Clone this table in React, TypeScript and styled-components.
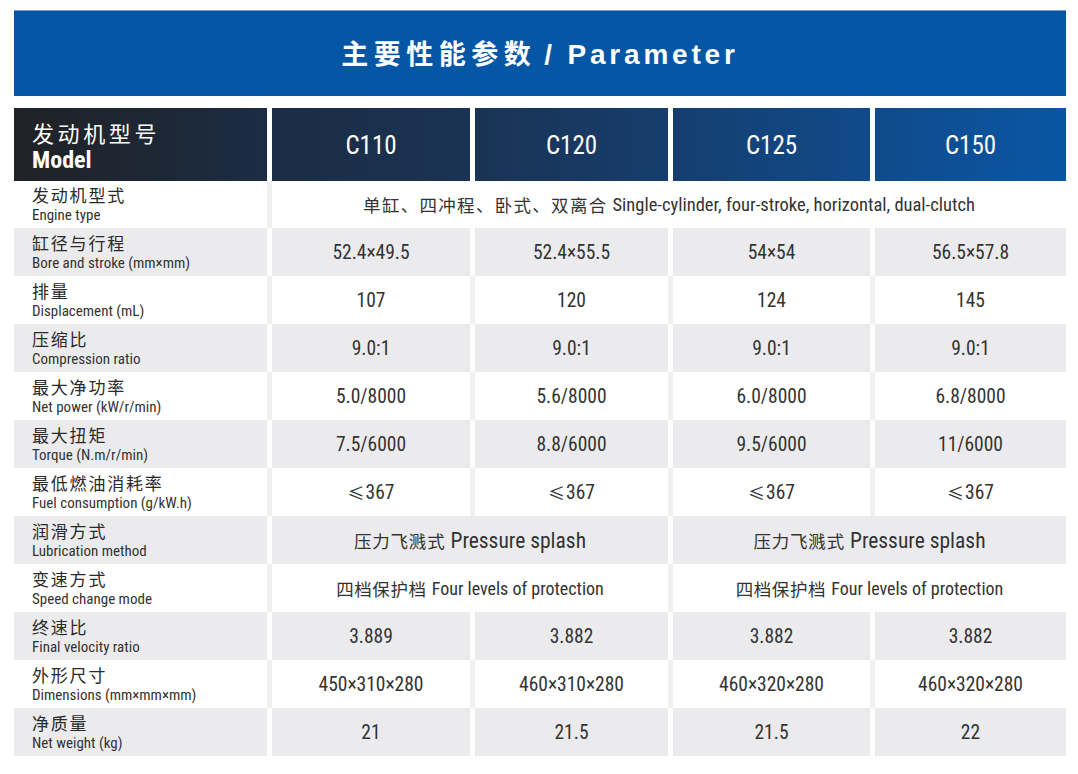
import React from 'react';
import styled, { createGlobalStyle } from 'styled-components';

const NARROW = `"Liberation Sans Narrow", "Arial Narrow", "Roboto Condensed", Roboto, "Noto Sans CJK SC", sans-serif`;
const CJK = `"Noto Sans CJK SC", "Noto Sans", sans-serif`;

const GlobalStyle = createGlobalStyle`
  html, body { margin: 0; padding: 0; background: #ffffff; }
  body { font-family: ${NARROW}; color: #333; }
`;

const COLS = '253px 198px 193px 197px 191px';
const TABLE_W = 1052;
const HEADER_GRADIENT = `linear-gradient(90deg, #202226 0%, #1d2836 14%, #1b2d46 25%, #1b3252 42%, #173a64 56%, #13437a 70%, #0f4c8e 84%, #0a56a4 100%)`;

const Page = styled.div`
  width: ${TABLE_W}px;
  padding: 10px 12px 17px 14px;
`;

const Banner = styled.header`
  height: 86px;
  background: #0556a5;
  border-top: 1px solid #6e9cd2;
  box-sizing: border-box;
  display: flex;
  align-items: center;
  justify-content: center;
  margin-bottom: 12px;
`;

const Title = styled.h1`
  margin: 0;
  color: #ffffff;
  font-weight: 700;
  display: flex;
  align-items: baseline;
  padding-bottom: 2px;
`;

const TitleZh = styled.span`
  font-family: ${CJK};
  font-size: 27px;
  letter-spacing: 5.5px;
`;

const TitleEn = styled.span`
  font-family: "Liberation Sans", Arial, sans-serif;
  font-size: 28px;
  letter-spacing: 3.8px;
  margin-left: 8px;
`;

const Table = styled.section`
  display: flex;
  flex-direction: column;
`;

const HeadRow = styled.div`
  display: grid;
  grid-template-columns: ${COLS};
  column-gap: 5px;
  height: 73px;
`;

const HeadCell = styled.div<{ $offset: number }>`
  background: ${HEADER_GRADIENT};
  background-size: ${TABLE_W}px 100%;
  background-position: ${(p) => -p.$offset}px 0;
  color: #ffffff;
  display: flex;
  align-items: center;
  justify-content: center;
  font-size: 25px;
  padding-top: 1px;
`;

const HeadLabel = styled(HeadCell)`
  flex-direction: column;
  align-items: flex-start;
  justify-content: center;
  padding-left: 18px;
  padding-top: 0;
  padding-bottom: 1px;
`;

const HeadZh = styled.span`
  font-family: ${CJK};
  font-size: 22px;
  letter-spacing: 3.6px;
  line-height: 32px;
`;

const HeadEn = styled.span`
  font-weight: 700;
  font-size: 24px;
  line-height: 25px;
`;

const Row = styled.div<{ $shade: boolean; $h: number }>`
  display: grid;
  grid-template-columns: ${COLS};
  column-gap: 5px;
  height: ${(p) => p.$h}px;
  background: ${(p) => (p.$shade ? '#ffffff' : '#eff0f2')};
`;

const Cell = styled.div<{ $shade: boolean; $span: number; $size: number }>`
  grid-column: span ${(p) => p.$span};
  background: ${(p) => (p.$shade ? '#ebebed' : '#ffffff')};
  display: flex;
  align-items: center;
  justify-content: center;
  font-size: ${(p) => p.$size}px;
  color: #333;
  white-space: nowrap;
`;

const LabelCell = styled.div<{ $shade: boolean }>`
  background: ${(p) => (p.$shade ? '#ebebed' : '#ffffff')};
  display: flex;
  flex-direction: column;
  justify-content: center;
  padding-left: 18px;
  padding-bottom: 1px;
`;

const LabelZh = styled.span`
  font-family: ${CJK};
  font-size: 17px;
  letter-spacing: 1.8px;
  line-height: 22px;
  color: #2a2a2a;
`;

const LabelEn = styled.span`
  font-size: 15px;
  line-height: 18px;
  color: #333;
`;

const Zh = styled.span<{ $size: number; $track: number }>`
  font-family: ${CJK};
  font-size: ${(p) => p.$size}px;
  margin-right: 5px;
  letter-spacing: ${(p) => p.$track}px;
`;

const Sym = styled.span`
  font-family: ${CJK};
  font-size: 17px;
  margin-right: 1px;
`;

type CellData = { zh?: string; sym?: string; text: string; span?: number; size?: number; zhSize?: number; track?: number };
type RowData = { zh: string; en: string; cells: CellData[] };

const v = (text: string): CellData => ({ text });
const le = (text: string): CellData => ({ sym: '≤', text });

const rows: RowData[] = [
  {
    zh: '发动机型式',
    en: 'Engine type',
    cells: [{ zh: '单缸、四冲程、卧式、双离合', text: 'Single-cylinder, four-stroke, horizontal, dual-clutch', span: 4, size: 18.5, zhSize: 17.5, track: 1.3 }],
  },
  { zh: '缸径与行程', en: 'Bore and stroke (mm×mm)', cells: ['52.4×49.5', '52.4×55.5', '54×54', '56.5×57.8'].map(v) },
  { zh: '排量', en: 'Displacement (mL)', cells: ['107', '120', '124', '145'].map(v) },
  { zh: '压缩比', en: 'Compression ratio', cells: ['9.0:1', '9.0:1', '9.0:1', '9.0:1'].map(v) },
  { zh: '最大净功率', en: 'Net power (kW/r/min)', cells: ['5.0/8000', '5.6/8000', '6.0/8000', '6.8/8000'].map(v) },
  { zh: '最大扭矩', en: 'Torque (N.m/r/min)', cells: ['7.5/6000', '8.8/6000', '9.5/6000', '11/6000'].map(v) },
  { zh: '最低燃油消耗率', en: 'Fuel consumption (g/kW.h)', cells: ['367', '367', '367', '367'].map(le) },
  {
    zh: '润滑方式',
    en: 'Lubrication method',
    cells: [
      { zh: '压力飞溅式', text: 'Pressure splash', span: 2, size: 21.5, zhSize: 17.5, track: 0.8 },
      { zh: '压力飞溅式', text: 'Pressure splash', span: 2, size: 21.5, zhSize: 17.5, track: 0.8 },
    ],
  },
  {
    zh: '变速方式',
    en: 'Speed change mode',
    cells: [
      { zh: '四档保护档', text: 'Four levels of protection', span: 2, size: 18, zhSize: 17.5, track: 0.6 },
      { zh: '四档保护档', text: 'Four levels of protection', span: 2, size: 18, zhSize: 17.5, track: 0.6 },
    ],
  },
  { zh: '终速比', en: 'Final velocity ratio', cells: ['3.889', '3.882', '3.882', '3.882'].map(v) },
  { zh: '外形尺寸', en: 'Dimensions (mm×mm×mm)', cells: ['450×310×280', '460×310×280', '460×320×280', '460×320×280'].map(v) },
  { zh: '净质量', en: 'Net weight (kg)', cells: ['21', '21.5', '21.5', '22'].map(v) },
];

const models = [
  { name: 'C110', offset: 258 },
  { name: 'C120', offset: 461 },
  { name: 'C125', offset: 659 },
  { name: 'C150', offset: 861 },
];

export default function App() {
  return (
    <>
      <GlobalStyle />
      <Page>
        <Banner>
          <Title>
            <TitleZh>主要性能参数</TitleZh>
            <TitleEn>/ Parameter</TitleEn>
          </Title>
        </Banner>
        <Table>
          <HeadRow>
            <HeadLabel $offset={0}>
              <HeadZh>发动机型号</HeadZh>
              <HeadEn>Model</HeadEn>
            </HeadLabel>
            {models.map((m) => (
              <HeadCell key={m.name} $offset={m.offset}>
                {m.name}
              </HeadCell>
            ))}
          </HeadRow>
          {rows.map((r, i) => {
            const shade = i % 2 === 1;
            return (
              <Row key={r.zh} $shade={shade} $h={i === 0 ? 47 : 48}>
                <LabelCell $shade={shade}>
                  <LabelZh>{r.zh}</LabelZh>
                  <LabelEn>{r.en}</LabelEn>
                </LabelCell>
                {r.cells.map((c, j) => (
                  <Cell key={j} $shade={shade} $span={c.span ?? 1} $size={c.size ?? 19.5}>
                    {c.zh && (
                      <Zh $size={c.zhSize ?? 18} $track={c.track ?? 0.6}>
                        {c.zh}
                      </Zh>
                    )}
                    {c.sym && <Sym>{c.sym}</Sym>}
                    {c.text}
                  </Cell>
                ))}
              </Row>
            );
          })}
        </Table>
      </Page>
    </>
  );
}
